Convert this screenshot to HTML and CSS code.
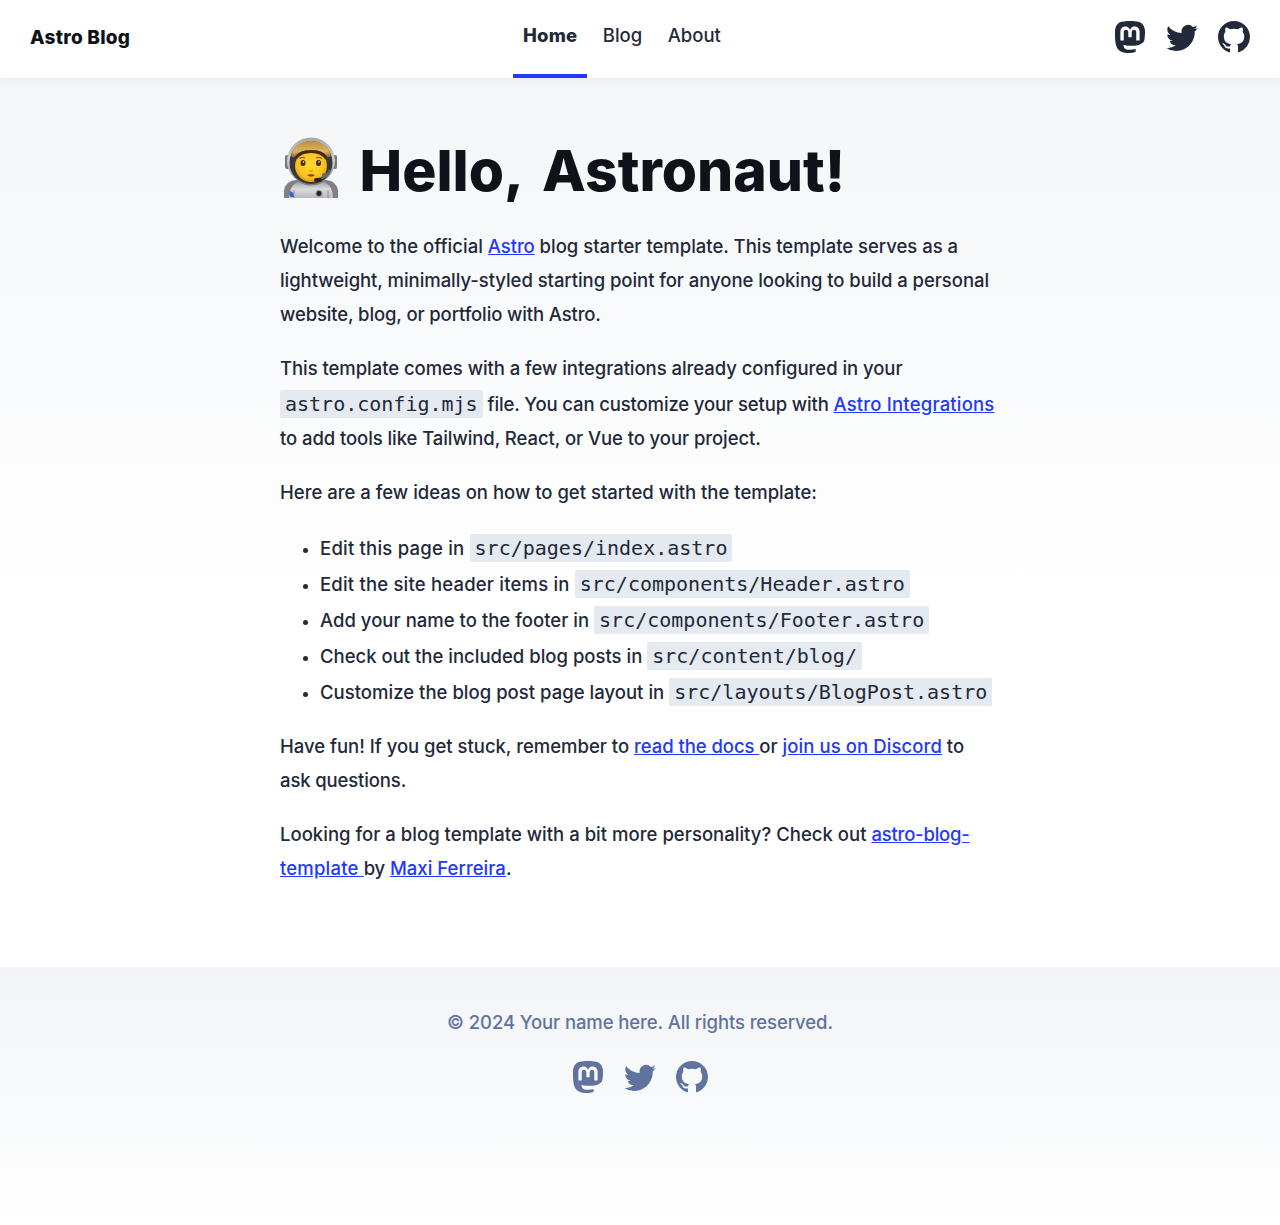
FILE: index.html
```html
<!DOCTYPE html>
<html lang="en">
<head>
<meta charset="utf-8">
<title>Astro Blog</title>
<link rel="stylesheet" href="styles.css">
</head>
<body>
<svg class="sprite" aria-hidden="true">
  <symbol id="mastodon" viewBox="0 0 16 16"><path d="M11.19 12.195c2.016-.24 3.77-1.475 3.99-2.603.348-1.778.32-4.339.32-4.339 0-3.47-2.286-4.488-2.286-4.488C12.062.238 10.083.017 8.027 0h-.05C5.92.017 3.942.238 2.79.765c0 0-2.285 1.017-2.285 4.488l-.002.662c-.004.64-.007 1.35.011 2.091.083 3.394.626 6.74 3.78 7.57 1.454.383 2.703.463 3.709.408 1.823-.1 2.847-.647 2.847-.647l-.06-1.317s-1.303.41-2.767.36c-1.45-.05-2.98-.156-3.215-1.928a3.614 3.614 0 0 1-.033-.496s1.424.346 3.228.428c1.103.05 2.137-.064 3.188-.189zm1.613-2.47H11.13v-4.08c0-.859-.364-1.295-1.091-1.295-.804 0-1.207.517-1.207 1.541v2.233H7.168V5.89c0-1.024-.403-1.541-1.207-1.541-.727 0-1.091.436-1.091 1.296v4.079H3.197V5.522c0-.859.22-1.541.66-2.046.456-.505 1.052-.764 1.793-.764.856 0 1.504.328 1.933.983L8 4.39l.417-.695c.429-.655 1.077-.983 1.934-.983.74 0 1.336.259 1.791.764.442.505.661 1.187.661 2.046v4.203z"/></symbol>
  <symbol id="twitter" viewBox="0 0 16 16"><path d="M5.026 15c6.038 0 9.341-5.003 9.341-9.334 0-.14 0-.282-.006-.422A6.685 6.685 0 0 0 16 3.542a6.658 6.658 0 0 1-1.889.518 3.301 3.301 0 0 0 1.447-1.817 6.533 6.533 0 0 1-2.087.793A3.286 3.286 0 0 0 7.875 6.03a9.325 9.325 0 0 1-6.767-3.429 3.289 3.289 0 0 0 1.018 4.382A3.323 3.323 0 0 1 .64 6.575v.045a3.288 3.288 0 0 0 2.632 3.218 3.203 3.203 0 0 1-.865.115 3.23 3.23 0 0 1-.614-.057 3.283 3.283 0 0 0 3.067 2.277A6.588 6.588 0 0 1 .78 13.58a6.32 6.32 0 0 1-.78-.045A9.344 9.344 0 0 0 5.026 15z"/></symbol>
  <symbol id="github" viewBox="0 0 16 16"><path d="M8 0C3.58 0 0 3.58 0 8c0 3.54 2.29 6.53 5.47 7.59.4.07.55-.17.55-.38 0-.19-.01-.82-.01-1.49-2.01.37-2.53-.49-2.69-.94-.09-.23-.48-.94-.82-1.13-.28-.15-.68-.52-.01-.53.63-.01 1.08.58 1.23.82.72 1.21 1.87.87 2.33.66.07-.52.28-.87.51-1.07-1.78-.2-3.64-.89-3.64-3.95 0-.87.31-1.59.82-2.15-.08-.2-.36-1.02.08-2.12 0 0 .67-.21 2.2.82.64-.18 1.32-.27 2-.27.68 0 1.36.09 2 .27 1.53-1.04 2.2-.82 2.2-.82.44 1.1.16 1.92.08 2.12.51.56.82 1.27.82 2.15 0 3.07-1.87 3.75-3.65 3.95.29.25.54.73.54 1.48 0 1.07-.01 1.93-.01 2.2 0 .21.15.46.55.38A8.012 8.012 0 0 0 16 8c0-4.42-3.58-8-8-8z"/></symbol>
</svg>

<header class="site-header">
  <div class="brand">Astro Blog</div>
  <nav class="nav">
    <a class="nav-link active">Home</a>
    <a class="nav-link">Blog</a>
    <a class="nav-link">About</a>
  </nav>
  <div class="social">
    <svg><use href="#mastodon"/></svg>
    <svg><use href="#twitter"/></svg>
    <svg><use href="#github"/></svg>
  </div>
</header>

<main class="content">
  <h1 class="title">
    <svg class="astronaut" viewBox="0 0 54 62" role="img" aria-label="Astronaut">
      <defs>
        <linearGradient id="shell" x1="0" x2="0" y1="0" y2="1"><stop offset="0" stop-color="#a9a9aa"/><stop offset=".5" stop-color="#d0d0d2"/><stop offset="1" stop-color="#77777a"/></linearGradient>
        <linearGradient id="visor" x1="0" x2="0" y1="0" y2="1"><stop offset="0" stop-color="#bd8f3c"/><stop offset=".65" stop-color="#e0b565"/><stop offset="1" stop-color="#8b5e20"/></linearGradient>
        <radialGradient id="face" cx=".5" cy=".45" r=".6"><stop offset="0" stop-color="#ffdc35"/><stop offset=".7" stop-color="#fbc21b"/><stop offset="1" stop-color="#d08b08"/></radialGradient>
        <linearGradient id="suit" x1="0" x2="0" y1="0" y2="1"><stop offset="0" stop-color="#a3a3a7"/><stop offset=".45" stop-color="#dcdce0"/><stop offset="1" stop-color="#b9b9be"/></linearGradient>
      </defs>
      <path d="M0 61V54Q1 44 12 43H42Q53 44 54 54V61Z" fill="#818185"/>
      <path d="M5 61Q5 49 14 45Q27 52 40 45Q49 49 49 61Z" fill="url(#suit)"/>
      <path d="M10 61V53M44 61V53" stroke="#8a8a8f" stroke-width="1"/>
      <rect x="1" y="18" width="5" height="14" rx="2" fill="#77777a"/>
      <rect x="48" y="18" width="5" height="14" rx="2" fill="#77777a"/>
      <ellipse cx="27" cy="24" rx="24" ry="23.5" fill="url(#shell)"/>
      <ellipse cx="27" cy="25.5" rx="21.5" ry="21.5" fill="#38383b"/>
      <ellipse cx="27" cy="29" rx="16" ry="16" fill="url(#face)"/>
      <path d="M7 19Q11 4 27 4T47 19Q45 21 43 20Q39 13 27 13T11 20Q8 21 7 19Z" fill="url(#visor)"/>
      <path d="M11 20Q15 13 27 13T43 20L41 22Q37 16 27 16T13 22Z" fill="#442d16"/>
      <path d="M15.500 21.500Q18 19.500 21 21M32 21Q35 19.500 38 21.500" stroke="#986014" stroke-width="1.300" fill="none"/>
      <ellipse cx="19" cy="26" rx="2.500" ry="3" fill="#432b17"/><ellipse cx="34.500" cy="26" rx="2.500" ry="3" fill="#432b17"/>
      <circle cx="19.500" cy="25" r=".8" fill="#fff"/><circle cx="35" cy="25" r=".8" fill="#fff"/>
      <path d="M25 33.500Q27 35 29 33.500" stroke="#c7850c" fill="none"/>
      <path d="M23 38Q27 36.500 31 38Q27 41.500 23 38Z" fill="#8a3b16"/>
      <path d="M46 33Q42 42 31 43" stroke="#606064" stroke-width="2.500" fill="none"/>
      <rect x="30" y="41" width="8" height="4" rx="2" fill="#242426"/>
      <rect x="38" y="36" width="6" height="4" rx="2" fill="#68686b"/>
      <path d="M6 54Q10 55 10 60L7 60Q4 58 6 54Z" fill="#2f65d8"/>
      <circle cx="35" cy="56.500" r="3.500" fill="#919196"/><circle cx="35" cy="56.500" r="2.400" fill="#252528"/>
    </svg>
    <span>Hello, Astronaut!</span>
  </h1>
  <p>
    <span class="line"><span class="s2">Welcome to the official </span><a class="n2">Astro</a><span class="n0"> blog starter template. This template serves as a</span></span>
    <span class="line n1">lightweight, minimally-styled starting point for anyone looking to build a personal</span>
    <span class="line n3">website, blog, or portfolio with Astro.</span>
  </p>
  <p>
    <span class="line n1">This template comes with a few integrations already configured in your</span>
    <span class="line code-line"><code>astro.config.mjs</code><span class="n3"> file. You can customize your setup with </span><a class="s4">Astro Integrations</a></span>
    <span class="line n2">to add tools like Tailwind, React, or Vue to your project.</span>
  </p>
  <p><span class="line">Here are a few ideas on how to get started with the template:</span></p>
  <ul class="ideas">
    <li><span class="s5">Edit this page in </span><code>src/pages/index.astro</code></li>
    <li><span class="s4">Edit the site header items in </span><code>src/components/Header.astro</code></li>
    <li><span class="s2">Add your name to the footer in </span><code>src/components/Footer.astro</code></li>
    <li><span>Check out the included blog posts in </span><code>src/content/blog/</code></li>
    <li><span class="s2">Customize the blog post page layout in </span><code>src/layouts/BlogPost.astro</code></li>
  </ul>
  <p>
    <span class="line"><span class="n0">Have fun! If you get stuck, remember to </span><a class="n1">read the docs </a>or <a class="s3">join us on Discord</a> to</span>
    <span class="line n3">ask questions.</span>
  </p>
  <p>
    <span class="line"><span class="s2">Looking for a blog template with a bit more personality? Check out </span><a class="n4">astro-blog-</a></span>
    <span class="line"><a class="s4">template </a><span class="n3">by </span><a class="s2">Maxi Ferreira</a>.</span>
  </p>
</main>

<footer class="site-footer">
  <div class="copyright">© 2024 Your name here. All rights reserved.</div>
  <div class="social">
    <svg><use href="#mastodon"/></svg>
    <svg><use href="#twitter"/></svg>
    <svg><use href="#github"/></svg>
  </div>
</footer>
</body>
</html>
```
FILE: styles.css
```css
* { box-sizing: border-box; }

body {
  margin: 0;
  min-height: 1225px;
  display: flex;
  flex-direction: column;
  background: linear-gradient(#f2f4f7, #fff) no-repeat;
  background-size: 100% 600px;
  color: #222939;
  font: 450 18.5px/34px Inter, "Liberation Sans", sans-serif;
}

.sprite { display: none; }

.site-header {
  height: 78px;
  padding: 0 30px;
  display: grid;
  grid-template-columns: 1fr auto 1fr;
  background: #fff;
  box-shadow: 0 2px 8px rgba(0, 0, 0, .05);
}
.brand {
  color: #0f1219;
  font-size: 19px;
  font-weight: 800;
  letter-spacing: .25px;
  line-height: 76px;
}
.nav {
  display: flex;
  gap: 5.5px;
  margin-right: 36px;
}
.nav-link {
  padding: 0 10px;
  line-height: 70px;
  border-bottom: 4px solid transparent;
}
.nav-link.active {
  font-weight: 800;
  letter-spacing: .15px;
  border-color: #2337ff;
}
.social {
  display: flex;
  gap: 20px;
  justify-content: flex-end;
}
.site-header .social { padding-top: 21px; }
.social svg {
  width: 32px;
  height: 32px;
  fill: currentColor;
}

.content {
  width: 720px;
  margin: 0 auto;
  padding-top: 59px;
  height: 889px;
}
.title {
  display: flex;
  gap: 21.5px;
  height: 73px;
  margin: 0 0 20px;
  padding-left: 4px;
  color: #0f1219;
  font-size: 57px;
  font-weight: 800;
  line-height: 67px;
  word-spacing: 8px;
}
.astronaut { width: 54px; height: 62px; }
p { margin: 0 0 20px; }
.line {
  display: block;
  height: 34px;
  line-height: 32px;
  white-space: pre;
}
.code-line { height: 36px; line-height: 36px; }
a { color: #2337ff; text-decoration: underline; }
.nav-link { color: inherit; text-decoration: none; }
code {
  display: inline-block;
  height: 28px;
  margin-top: 4px;
  padding: 0 5px;
  vertical-align: top;
  border-radius: 2px;
  background: #e5e9f0;
  font: 20px/28px "DejaVu Sans Mono", monospace;
}
.ideas {
  margin: 0 0 20px;
  padding: 0;
  list-style: none;
}
.ideas li {
  height: 36px;
  line-height: 36px;
  white-space: pre;
}
.ideas li::before {
  content: "";
  display: inline-block;
  width: 5px;
  height: 5px;
  margin: 0 12px 0 23px;
  border-radius: 50%;
  background: currentColor;
  vertical-align: 2px;
}

/* tracking steps */
.n4 { letter-spacing: -.22px; }
.n3 { letter-spacing: -.13px; }
.n2 { letter-spacing: -.08px; }
.n1 { letter-spacing: -.055px; }
.n0 { letter-spacing: -.02px; }
.s2 { letter-spacing: .02px; }
.s3 { letter-spacing: .08px; }
.s4 { letter-spacing: .19px; }
.s5 { letter-spacing: .22px; }

.site-footer {
  flex: 1;
  padding-top: 38px;
  background: linear-gradient(#f2f4f7, #fff);
  color: #60739f;
  text-align: center;
}
.copyright { letter-spacing: -.1px; }
.site-footer .social {
  justify-content: center;
  margin-top: 22px;
}
```
